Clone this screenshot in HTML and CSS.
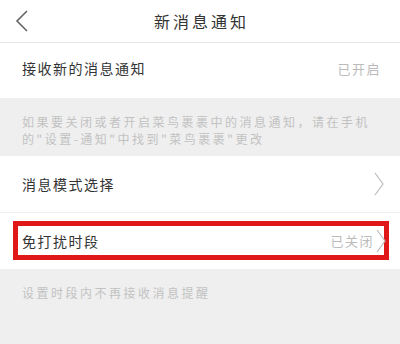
FILE: index.html
```html
<html>
  <head>
    <meta charset="utf-8">
    <link rel="stylesheet" href="styles.css">
  </head>
  <body>
    <div class='topBar'>
      <div class='backBtn'>
        <svg width='14' height='22' viewBox='0 0 14 22'>
          <polyline points='12,1 2,11 12,21' fill='none' stroke='#666' stroke-width='1.6'/>
        </svg>
      </div>
      <div class='topTitle'>新消息通知</div>
      <div class='backBtn'></div>
    </div>

    <div class='setRow firstRow'>
      <span class='setLabel'>接收新的消息通知</span>
      <span class='setValue'>已开启</span>
    </div>
    <div class='setNote'>
      如果要关闭或者开启菜鸟裹裹中的消息通知，请在手机<br>
      的"设置-通知"中找到"菜鸟裹裹"更改
    </div>

    <div class='setRow'>
      <span class='setLabel'>消息模式选择</span>
      <span class='setArrow'>
        <svg width='10' height='24' viewBox='0 0 10 24'>
          <polyline points='1,1 9,12 1,23' fill='none' stroke='#bbb' stroke-width='1.2'/>
        </svg>
      </span>
    </div>
    <div class='setRow markedRow'>
      <div class='markBox'>
        <span class='setLabel'>免打扰时段</span>
        <span class='setValue'>已关闭</span>
        <span class='setArrow'>
          <svg width='10' height='24' viewBox='0 0 10 24'>
            <polyline points='1,1 9,12 1,23' fill='none' stroke='#bbb' stroke-width='1.2'/>
          </svg>
        </span>
      </div>
    </div>
    <div class='setNote lastNote'>
      设置时段内不再接收消息提醒
    </div>
  </body>
</html>
```

FILE: styles.css
```css
body{
  margin: 0;
  width: 400px;
  height: 344px;
  overflow: hidden;
  background-color: #fff;
  font-family: "Noto Sans CJK SC", sans-serif;
}
.topBar{
  display: grid;
  grid-template-columns: 50px 1fr 50px;
  align-items: center;
  height: 42px;
  border-bottom: 1px solid #e6e6e6;
}
.backBtn{
  padding-left: 15px;
  display: flex;
  align-items: center;
}
.topTitle{
  text-align: center;
  font-size: 16px;
  letter-spacing: 3px;
  color: #333;
  padding-left: 3px;
}
.setRow{
  display: flex;
  align-items: center;
  height: 56px;
  padding: 0 16px 0 22px;
  background-color: #fff;
  border-top: 1px solid #eee;
}
.firstRow{
  height: 55px;
  border-top: none;
  padding: 0 19px 5px 22px;
  box-sizing: border-box;
}
.setLabel{
  flex: 1;
  font-size: 14px;
  letter-spacing: 1.5px;
  color: #333;
}
.setValue{
  font-size: 13px;
  letter-spacing: 1.5px;
  color: #bbb;
}
.setArrow{
  display: flex;
  align-items: center;
  margin-left: 6px;
}
.setNote{
  background-color: #efefef;
  padding: 15px 22px 8px 22px;
  font-size: 12px;
  line-height: 17px;
  letter-spacing: 2.5px;
  color: #c2c2c2;
  white-space: nowrap;
}
.markedRow{
  padding: 0 11px 0 13px;
  align-items: flex-start;
}
.markBox{
  flex: 1;
  display: flex;
  align-items: center;
  height: 39px;
  box-sizing: border-box;
  margin-top: 8px;
  border: 5px solid #e01818;
  padding: 0 0 0 4px;
}
.markBox .setArrow{
  margin-left: 2px;
  margin-right: -2px;
}
.lastNote{
  height: 77px;
  box-sizing: border-box;
}
```
